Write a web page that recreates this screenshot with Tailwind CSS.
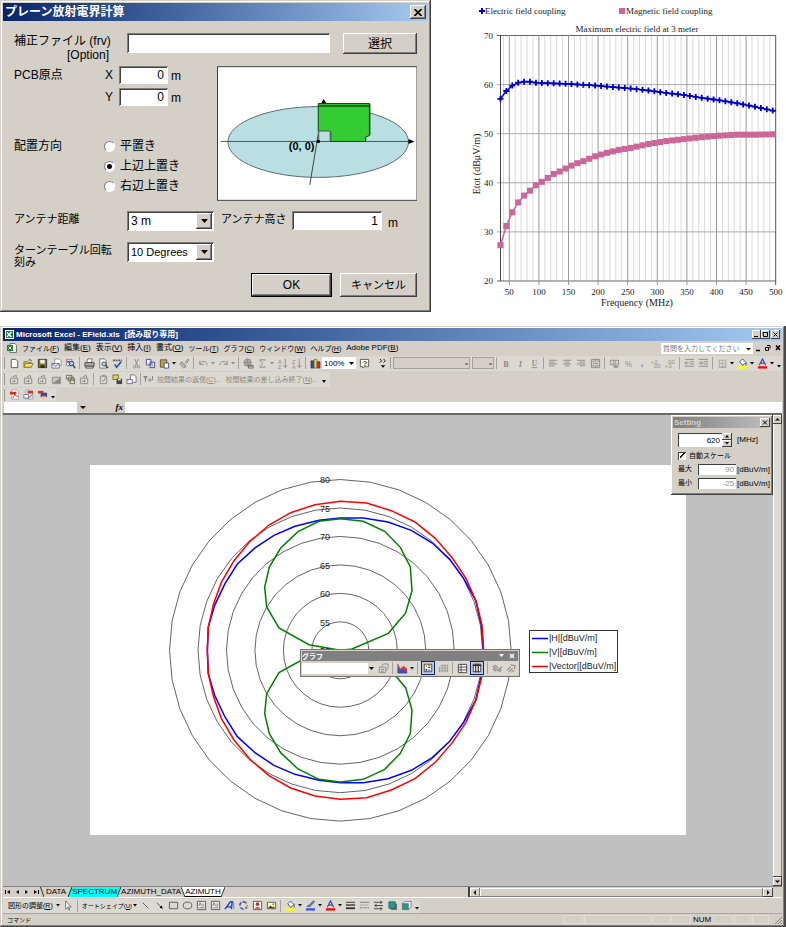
<!DOCTYPE html>
<html lang="ja">

<head>
  <meta charset="UTF-8">
  <meta name="viewport" content="width=device-width, initial-scale=1.0">
  <title>EField</title>
  <script src="https://cdn.jsdelivr.net/npm/@tailwindcss/browser@4"></script>
</head>

<body class="bg-white text-black font-['Liberation_Sans','Noto_Sans_CJK_JP',sans-serif] leading-none">
  <div class="flex items-start">
    <!-- Dialog -->
    <section class="w-[431px] shrink-0 bg-[#d4d0c8] p-[3px] text-[12px] shadow-[inset_-1px_-1px_0_#404040,inset_1px_1px_0_#d4d0c8,inset_-2px_-2px_0_#808080,inset_2px_2px_0_#fff]">
      <header class="flex h-[18px] items-center justify-between bg-linear-to-r from-[#0a246a] to-[#a6caf0] pl-[2px] pr-[2px]">
        <h1 class="text-[12px] font-bold text-white">プレーン放射電界計算</h1>
        <button aria-label="Close" class="flex h-[14px] w-4 items-center justify-center bg-[#d4d0c8] shadow-[inset_-1px_-1px_0_#404040,inset_1px_1px_0_#fff,inset_-2px_-2px_0_#808080]">
          <svg class="h-[7px] w-2" viewBox="0 0 8 7"><path d="M.5 0l7 7M7.500 0l-7 7" stroke="#000" stroke-width="1.600" /></svg>
        </button>
      </header>

      <form class="px-[11px] pb-3 pt-3" onsubmit="return false">
        <div class="flex h-[33px] items-start">
          <label for="frv" class="w-[113px] pr-[18px] pt-[1px] text-right leading-[14px]"><span class="block whitespace-nowrap text-left text-[12px]">補正ファイル (frv)</span>[Option]</label>
          <input id="frv" type="text" class="h-5 w-[203px] bg-white px-1 shadow-[inset_1px_1px_0_#808080,inset_-1px_-1px_0_#fff,inset_2px_2px_0_#404040]">
          <button class="ml-[13px] h-[21px] w-[74px] bg-[#d4d0c8] text-[12px] shadow-[inset_-1px_-1px_0_#404040,inset_1px_1px_0_#fff,inset_-2px_-2px_0_#808080]">選択</button>
        </div>

        <div class="flex h-[145px] items-start">
          <div class="w-[203px]">
            <div class="flex h-[22px] items-start">
              <span class="w-[91px] pt-[3px]">PCB原点</span>
              <label for="px" class="w-[14px] pt-[3px]">X</label>
              <input id="px" type="text" value="0" class="h-[18px] w-[49px] bg-white px-1 text-right shadow-[inset_1px_1px_0_#808080,inset_-1px_-1px_0_#fff,inset_2px_2px_0_#404040]">
              <span class="pl-[3px] pt-[4px]">m</span>
            </div>
            <div class="flex h-[48px] items-start">
              <span class="w-[91px]"></span>
              <label for="py" class="w-[14px] pt-[3px]">Y</label>
              <input id="py" type="text" value="0" class="h-[18px] w-[49px] bg-white px-1 text-right shadow-[inset_1px_1px_0_#808080,inset_-1px_-1px_0_#fff,inset_2px_2px_0_#404040]">
              <span class="pl-[3px] pt-[4px]">m</span>
            </div>
            <fieldset class="flex">
              <legend class="float-left w-[90px] pt-1">配置方向</legend>
              <div class="text-[12px]">
                <label class="flex h-5 items-center gap-[5px]"><input type="radio" name="dir" class="h-[11px] w-[11px] appearance-none rounded-full border border-[#808080] border-b-white border-r-white bg-white">平置き</label>
                <label class="flex h-5 items-center gap-[5px]"><input type="radio" name="dir" checked class="h-[11px] w-[11px] appearance-none rounded-full border border-[#808080] border-b-white border-r-white bg-white checked:bg-[radial-gradient(circle,#000_2px,#fff_3px)]">上辺上置き</label>
                <label class="flex h-5 items-center gap-[5px]"><input type="radio" name="dir" class="h-[11px] w-[11px] appearance-none rounded-full border border-[#808080] border-b-white border-r-white bg-white">右辺上置き</label>
              </div>
            </fieldset>
          </div>
          <svg class="h-[135px] w-[201px] bg-white" viewBox="0 0 201 135">
            <rect x=".5" y=".5" width="200" height="134" fill="none" stroke="#404040" />
            <ellipse cx="101.500" cy="76" rx="90.500" ry="35.500" fill="#b9dfe2" stroke="#5f6c6d" />
            <path d="M4 75.500H195" stroke="#555" />
            <path d="M192 73l6 2.500-6 2.500z" fill="#000" />
            <path d="M102 65L93 119" stroke="#444" />
            <path d="M104 38l3-5 3 5z" fill="#000" />
            <path d="M101.500 37.500H153V69.500L149 71V75.500H114V65.500H101.500z" fill="#3c3" stroke="#123c12" />
            <path d="M101.500 40H153M153 38V69" stroke="#0b530b" stroke-width="1.500" />
            <path d="M102 65h11.500v10.500H102z" fill="#b9dfe2" stroke="#555" />
            <rect x="100" y="74" width="3" height="3" />
            <text x="72" y="84" font-size="11" font-weight="bold">(0, 0)</text>
          </svg>
        </div>

        <div class="flex h-[31px] items-start">
          <label for="dist" class="w-[113px] pt-[3px] text-[11px]">アンテナ距離</label>
          <div class="relative">
            <select id="dist" class="h-5 w-[87px] appearance-none bg-white pl-1 text-[12px] shadow-[inset_1px_1px_0_#808080,inset_-1px_-1px_0_#fff,inset_2px_2px_0_#404040]"><option>3 m</option></select>
            <span class="pointer-events-none absolute right-[2px] top-[2px] flex h-4 w-4 items-center justify-center bg-[#d4d0c8] shadow-[inset_-1px_-1px_0_#404040,inset_1px_1px_0_#fff,inset_-2px_-2px_0_#808080]"><svg class="h-1 w-[7px]" viewBox="0 0 7 4"><path d="M0 0h7L3.500 4z" /></svg></span>
          </div>
          <label for="ht" class="w-[78px] pl-[7px] pt-[3px] text-[11px]">アンテナ高さ</label>
          <input id="ht" type="text" value="1" class="h-[19px] w-[90px] bg-white px-1 text-right shadow-[inset_1px_1px_0_#808080,inset_-1px_-1px_0_#fff,inset_2px_2px_0_#404040]">
          <span class="pl-[6px] pt-[6px]">m</span>
        </div>
        <div class="flex h-[31px] items-start">
          <label for="step" class="w-[113px] pt-[2px] text-[11px] leading-[12px]">ターンテーブル回転<br>刻み</label>
          <div class="relative">
            <select id="step" class="h-5 w-[87px] appearance-none bg-white pl-1 text-[11px] shadow-[inset_1px_1px_0_#808080,inset_-1px_-1px_0_#fff,inset_2px_2px_0_#404040]"><option>10 Degrees</option></select>
            <span class="pointer-events-none absolute right-[2px] top-[2px] flex h-4 w-4 items-center justify-center bg-[#d4d0c8] shadow-[inset_-1px_-1px_0_#404040,inset_1px_1px_0_#fff,inset_-2px_-2px_0_#808080]"><svg class="h-1 w-[7px]" viewBox="0 0 7 4"><path d="M0 0h7L3.500 4z" /></svg></span>
          </div>
        </div>
        <div class="flex justify-end gap-2">
          <button class="h-6 w-[81px] border border-black bg-[#d4d0c8] text-[12px] shadow-[inset_-1px_-1px_0_#404040,inset_1px_1px_0_#fff,inset_-2px_-2px_0_#808080]">OK</button>
          <button class="h-6 w-[77px] bg-[#d4d0c8] text-[11px] shadow-[inset_-1px_-1px_0_#404040,inset_1px_1px_0_#fff,inset_-2px_-2px_0_#808080]">キャンセル</button>
        </div>
      </form>
    </section>

    <!-- Line chart -->
    <svg id="lineChart" class="min-w-0 flex-1 font-['Liberation_Serif',serif] text-[9px]" viewBox="0 0 355 312" fill="#222">
      <path d="M51 8.500v6M48 11.500h6" transform="translate(0 -.5)" stroke="#0000c8" stroke-width="2" />
      <text x="54" y="14">Electric field coupling</text>
      <rect x="188" y="8" width="6" height="6" fill="#cc6699" />
      <text x="195" y="14">Magnetic field coupling</text>
      <text x="206" y="32" text-anchor="middle">Maximum electric field at 3 meter</text>
      <text x="206" y="306" text-anchor="middle" font-size="10">Frequency (MHz)</text>
      <text x="-164" y="49" text-anchor="middle" transform="rotate(-90)" font-size="10">Etot (dBμV/m)</text>
      <g id="lineGrid"></g>
      <g id="lineSeries"></g>
    </svg>
  </div>

  <!-- Excel window -->
  <section class="mt-[14px] bg-[#d4d0c8] py-[2px] pl-[3px] pr-[4px] text-[8px] shadow-[inset_-2px_-1px_0_#4a4848,inset_1px_1px_0_#d4d0c8,inset_-3px_-2px_0_#808080,inset_2px_2px_0_#fff]">
    <header class="flex h-[13px] items-center bg-linear-to-r from-[#0a246a] to-[#a6caf0] px-[2px] text-white">
      <svg class="h-[9px] w-[9px]" viewBox="0 0 9 9"><rect width="9" height="9" fill="#fff" /><path d="M1 1h7v7H1z" fill="#1d7d33" /><path d="M2 2.500l4.500 4.500M6.500 2L2 7" stroke="#fff" stroke-width="1.400" /></svg>
      <h2 class="flex gap-[5px] whitespace-pre pl-[2px] font-bold"><span>Microsoft Excel - EField.xls</span><span>[読み取り専用]</span></h2>
      <div class="ml-auto flex">
        <button aria-label="Minimize" class="h-[9px] w-[9px] bg-[#d4d0c8] shadow-[inset_-1px_-1px_0_#404040,inset_1px_1px_0_#fff]"><svg viewBox="0 0 9 9"><path d="M2 6.500h4" stroke="#000" /></svg></button>
        <button aria-label="Maximize" class="h-[9px] w-[9px] bg-[#d4d0c8] shadow-[inset_-1px_-1px_0_#404040,inset_1px_1px_0_#fff]"><svg viewBox="0 0 9 9"><path d="M2 2.500h4.500v4H2.500z" fill="none" stroke="#000" /></svg></button>
        <button aria-label="Close" class="ml-[1px] h-[9px] w-[9px] bg-[#d4d0c8] shadow-[inset_-1px_-1px_0_#404040,inset_1px_1px_0_#fff]"><svg viewBox="0 0 9 9"><path d="M2.500 2.500l4 4M6.500 2.500l-4 4" stroke="#000" /></svg></button>
      </div>
    </header>

    <nav class="flex h-[14px] items-center gap-[5px] whitespace-nowrap pl-1">
      <svg class="h-[10px] w-[10px]" viewBox="0 0 10 10"><path d="M3 .5h5l1.500 2v7H3z" fill="#fff" stroke="#777" /><path d="M0 2h6v6H0z" fill="#1d7d33" /><path d="M1.500 3.500l3 3M4.500 3.500l-3 3" stroke="#fff" /></svg>
      <button class="text-[7px]">ファイル(<u>F</u>)</button>
      <button class="text-[8px]">編集(<u>E</u>)</button>
      <button class="text-[8px]">表示(<u>V</u>)</button>
      <button class="text-[8px]">挿入(<u>I</u>)</button>
      <button class="text-[8px]">書式(<u>O</u>)</button>
      <button class="text-[7px]">ツール(<u>T</u>)</button>
      <button class="text-[7px]">グラフ(<u>C</u>)</button>
      <button class="text-[7px]">ウィンドウ(<u>W</u>)</button>
      <button class="text-[7px]">ヘルプ(<u>H</u>)</button>
      <button class="text-[8px]">Adobe PDF(<u>B</u>)</button>
      <div class="ml-auto flex items-center">
        <input aria-label="質問" type="text" value="質問を入力してください" class="h-[11px] w-[83px] bg-white pl-[2px] text-[7px] text-[#777]">
        <svg class="h-[11px] w-[9px] bg-white" viewBox="0 0 9 11"><path d="M2 5h5L4.500 7.500z" /></svg>
        <svg class="h-[10px] w-[29px]" viewBox="0 0 29 10" fill="none" stroke="#000"><path d="M3 7.500h4" stroke-width="1.500" /><path d="M12.500 4.500h3v3h-3zM14 2.500h3v3" /><path d="M23 2.500l4 4.500M27 2.500l-4 4.500" stroke-width="1.500" /></svg>
      </div>
    </nav>

    <div class="flex h-4 items-center overflow-hidden">
      <div id="tbStandard" class="flex h-[15px] shrink-0 items-center bg-[#dcd9d2]"></div>
      <input aria-label="Zoom" type="text" value="100%" class="h-3 w-[26px] shrink-0 bg-white pl-[2px] text-[8px]">
      <svg class="h-3 w-2 shrink-0 bg-white" viewBox="0 0 8 12"><path d="M1 5h5L3.500 8z" /></svg>
      <div id="tbHelp" class="flex h-[15px] w-[34px] shrink-0 items-center bg-[#dcd9d2] pl-[1px]"></div>
      <div class="flex h-[15px] shrink-0 items-center gap-[2px] bg-[#dcd9d2]">
        <span class="h-3 w-[1px] bg-[#999]"></span>
        <select aria-label="Font" disabled class="h-3 w-[77px] appearance-none border border-[#a5a29c] bg-[#d4d0c8] bg-[linear-gradient(#8d8a84,#8d8a84)] bg-[length:3px_2px] bg-[position:71px_5px] bg-no-repeat"></select>
        <select aria-label="Size" disabled class="h-3 w-[22px] appearance-none border border-[#a5a29c] bg-[#d4d0c8] bg-[linear-gradient(#8d8a84,#8d8a84)] bg-[length:3px_2px] bg-[position:16px_5px] bg-no-repeat"></select>
      </div>
      <div id="tbFormat" class="flex h-[15px] flex-1 items-center bg-[#dcd9d2]"></div>
    </div>

    <div class="flex h-4 items-center">
      <div id="tbReview" class="flex h-[15px] items-center bg-[#dcd9d2]"></div>
      <div class="flex h-[15px] items-center gap-1 whitespace-nowrap bg-[#dcd9d2] pr-1 text-[7px] text-[#8d8a84]">
        <svg class="h-2 w-[10px]" viewBox="0 0 10 8" fill="#8d8a84"><path d="M0 1h5L3 4v3H2V4z" /><path d="M9.500 1v4H6M7.500 3L5.500 5l2 2" fill="none" stroke="#8d8a84" /></svg>
        <button disabled>校閲結果の返信(<u>C</u>)...</button>
        <button disabled>校閲結果の差し込み終了(<u>N</u>)...</button>
        <svg class="mt-1 h-[3px] w-1" viewBox="0 0 4 3"><path d="M0 0h4L2 3z" fill="#000" /></svg>
      </div>
    </div>

    <div class="flex h-[15px] items-center">
      <div id="tbPdf" class="flex h-[14px] items-center bg-[#dcd9d2]"></div>
    </div>

    <div class="flex h-[11px] items-center">
      <input aria-label="Name box" type="text" class="ml-[1px] h-full w-[73px] bg-white">
      <svg class="h-[11px] w-[12px]" viewBox="0 0 12 11"><path d="M3 4h6L6 7z" /></svg>
      <label for="formula" class="w-9 pr-[2px] text-right font-['Liberation_Serif',serif] text-[9px] font-bold italic">fx</label>
      <input id="formula" type="text" class="h-full min-w-0 flex-1 bg-white">
    </div>

    <!-- Chart sheet -->
    <div class="flex border-t-2 border-[#6b6b6b]">
      <main class="relative min-w-0 flex-1 bg-[#c0c0c0] px-[87px] pb-[51px] pt-[50px]">
        <div class="relative bg-white">
          <svg id="polar" class="block w-full text-[9px]" viewBox="0 0 596 370" fill="none">
            <g id="polarLines" transform="translate(70 5) scale(.33333)" stroke-width="4.500"></g>
            <g fill="#222">
              <text x="230" y="18">80</text>
              <text x="230" y="47">75</text>
              <text x="230" y="75">70</text>
              <text x="230" y="104">65</text>
              <text x="230" y="132">60</text>
              <text x="230" y="161">55</text>
              <text x="230" y="189">50</text>
            </g>
            <rect x="439.500" y="165.500" width="88" height="42" fill="#fff" stroke="#333" />
            <path d="M442 173.500h16" stroke="#00f" stroke-width="1.500" />
            <path d="M442 187.500h16" stroke="#008000" stroke-width="1.500" />
            <path d="M442 201.500h16" stroke="#f00" stroke-width="1.500" />
            <g fill="#222">
              <text x="459" y="176">|H|[dBuV/m]</text>
              <text x="459" y="190">|V|[dBuV/m]</text>
              <text x="459" y="204">|Vector|[dBuV/m]</text>
            </g>
          </svg>

          <!-- Floating chart toolbar -->
          <div class="absolute left-[210px] top-[184px] w-[220px] border border-[#77736d] bg-[#d4d0c8] p-[1px]">
            <div class="flex h-[10px] items-center bg-[#808080] pr-[2px] text-[7px] font-bold text-white">
              <span>グラフ</span>
              <svg class="ml-auto h-2 w-[17px]" viewBox="0 0 17 8"><path d="M0 2h5L2.500 5z" fill="#fff" /><path d="M11 2l4 4M15 2l-4 4" stroke="#fff" stroke-width="1.300" /></svg>
            </div>
            <div class="flex h-[14px] items-center">
              <input aria-label="Chart object" type="text" class="h-[11px] w-[73px] min-w-0 bg-white">
              <svg class="h-[11px] w-[8px] shrink-0 bg-[#dcd9d2]" viewBox="0 0 8 11"><path d="M1 4h5L3.500 7z" /></svg>
              <div id="tbChart" class="flex shrink-0 items-center bg-[#dcd9d2]"></div>
            </div>
          </div>
        </div>

        <!-- Setting panel -->
        <form class="absolute right-0 top-0 w-[102px] bg-[#d4d0c8] p-[2px] pb-[6px] text-[8px] shadow-[inset_-1px_-1px_0_#404040,inset_1px_1px_0_#fff,inset_-2px_-2px_0_#808080]" onsubmit="return false">
          <div class="flex h-[11px] items-center justify-between bg-linear-to-r from-[#808080] to-[#c0c0c0] px-[1px] font-bold text-[#d4d0c8]">
            <span>Setting</span>
            <button aria-label="Close" class="h-[9px] w-[10px] bg-[#d4d0c8] shadow-[inset_-1px_-1px_0_#404040,inset_1px_1px_0_#fff]"><svg class="h-[9px] w-[10px]" viewBox="0 0 10 9"><path d="M3 2.500l4 4M7 2.500l-4 4" stroke="#000" /></svg></button>
          </div>
          <div class="flex items-center pl-[5px] pt-[5px]">
            <input id="mhz" type="text" value="620" class="h-[14px] w-11 bg-white pr-[2px] text-right shadow-[inset_1px_1px_0_#404040,inset_-1px_-1px_0_#fff]">
            <span class="flex flex-col">
              <button aria-label="Up" class="h-[7px] w-[10px] bg-[#d4d0c8] shadow-[inset_-1px_-1px_0_#404040,inset_1px_1px_0_#fff]"><svg class="h-[7px] w-[10px]" viewBox="0 0 10 7"><path d="M3 4.500h4L5 2z" /></svg></button>
              <button aria-label="Down" class="h-[7px] w-[10px] bg-[#d4d0c8] shadow-[inset_-1px_-1px_0_#404040,inset_1px_1px_0_#fff]"><svg class="h-[7px] w-[10px]" viewBox="0 0 10 7"><path d="M3 2h4L5 4.500z" /></svg></button>
            </span>
            <label for="mhz" class="pl-[5px] text-[8px]">[MHz]</label>
          </div>
          <label class="flex h-[17px] items-center gap-[3px] pl-[5px] text-[7px]">
            <input type="checkbox" checked class="h-2 w-2 appearance-none bg-white bg-[linear-gradient(135deg,transparent_40%,#000_40%,#000_60%,transparent_60%)] bg-[length:5px_5px] bg-center bg-no-repeat shadow-[inset_1px_1px_0_#404040]">自動スケール
          </label>
          <div class="flex h-[14px] items-start pl-[5px] text-[8px]">
            <label for="max" class="w-5 pt-[1px] text-[7px]">最大</label>
            <input id="max" type="text" value="90" disabled class="h-[11px] w-[38px] bg-white pr-[2px] text-right text-[#909090] shadow-[inset_1px_1px_0_#404040]">
            <span class="pl-[1px] pt-[2px]">[dBuV/m]</span>
          </div>
          <div class="flex items-start pl-[5px] text-[8px]">
            <label for="min" class="w-5 pt-[1px] text-[7px]">最小</label>
            <input id="min" type="text" value="-25" disabled class="h-[11px] w-[38px] bg-white pr-[2px] text-right text-[#909090] shadow-[inset_1px_1px_0_#404040]">
            <span class="pl-[1px] pt-[2px]">[dBuV/m]</span>
          </div>
        </form>
      </main>

      <!-- Vertical scrollbar -->
      <div class="flex w-[9px] flex-col justify-between bg-[#dedbd4] shadow-[inset_1px_0_0_#fff,inset_-1px_0_0_#808080]">
        <button aria-label="Scroll up" class="h-[9px] w-[9px] bg-[#d4d0c8] shadow-[inset_-1px_-1px_0_#404040,inset_1px_1px_0_#fff]"><svg viewBox="0 0 9 9"><path d="M2 5.500h5L4.500 3z" /></svg></button>
        <button aria-label="Scroll down" class="h-[10px] w-[9px] border-t border-[#404040] bg-[#d4d0c8] shadow-[inset_-1px_-1px_0_#404040,inset_1px_1px_0_#fff]"><svg viewBox="0 0 9 9"><path d="M2 3.500h5L4.500 6z" /></svg></button>
      </div>
    </div>

    <!-- Sheet tabs -->
    <div class="flex h-[11px] items-center border-t border-[#808080]">
      <svg class="h-[10px] w-[37px]" viewBox="0 0 37 10"><path d="M2 3h1v4H2zM7 3v4L4 5zM16 3v4l-3-2zM22 3v4l3-2zM31 3v4l3-2zM35 3h1v4h-1z" /></svg>
      <button class="flex items-center"><svg class="h-[10px] w-1" viewBox="0 0 4 10"><path d="M.5 0L4 10" stroke="#000" stroke-width=".8" /></svg><span class="px-[2px]">DATA</span></button>
      <button class="flex items-center"><svg class="h-[10px] w-1" viewBox="0 0 4 10"><path d="M4 0v10H0z" fill="#00ffff" /><path d="M4 0L0 10" stroke="#000" stroke-width=".8" /></svg><span class="flex h-[10px] items-center bg-[#00ffff]">SPECTRUM</span></button>
      <button class="flex items-center"><svg class="h-[10px] w-1" viewBox="0 0 4 10"><path d="M0 0h4L0 10z" fill="#00ffff" /><path d="M4 0L0 10" stroke="#000" stroke-width=".8" /></svg><span class="text-[8px]">AZIMUTH_DATA</span></button>
      <button class="flex items-center"><svg class="h-[10px] w-1" viewBox="0 0 4 10"><path d="M0 0h4v10z" fill="#fff" /><path d="M0 0l4 10" stroke="#000" stroke-width=".8" /></svg><span class="flex h-[10px] items-center border-b border-black bg-white">AZIMUTH</span><svg class="h-[10px] w-1" viewBox="0 0 4 10"><path d="M0 0h4L0 10z" fill="#fff" /><path d="M4 0L0 10" stroke="#000" stroke-width=".8" /></svg></button>
      <div class="ml-auto flex h-[10px] w-[314px] items-center border-l-2 border-[#404040]">
        <button aria-label="Scroll left" class="h-[9px] w-[10px] bg-[#d4d0c8] shadow-[inset_-1px_-1px_0_#808080,inset_1px_1px_0_#fff]"><svg class="h-[9px] w-[10px]" viewBox="0 0 10 9"><path d="M6 2v5L3.500 4.500z" /></svg></button>
        <span class="h-[9px] flex-1 shadow-[inset_-1px_-1px_0_#808080,inset_1px_1px_0_#fff]"></span>
        <button aria-label="Scroll right" class="mr-[9px] h-[9px] w-[10px] bg-[#d4d0c8] shadow-[inset_-1px_-1px_0_#404040,inset_1px_1px_0_#fff]"><svg class="h-[9px] w-[10px]" viewBox="0 0 10 9"><path d="M4 2v5l2.500-2.500z" /></svg></button>
      </div>
    </div>

    <!-- Drawing toolbar -->
    <div class="flex h-4 items-center border-t border-white">
      <div class="flex h-[14px] items-center whitespace-nowrap bg-[#dcd9d2] pl-[5px]">
        <button class="text-[7px]">図形の調整(<u>R</u>)</button>
        <div id="tbDraw1" class="flex items-center pl-[2px] pr-[2px]"></div>
        <button class="text-[6px]">オートシェイプ(<u>U</u>)</button>
        <div id="tbDraw2" class="flex items-center"></div>
      </div>
    </div>

    <!-- Status bar -->
    <footer class="flex h-3 items-center border-t border-[#aaa69e]">
      <span class="pl-1 text-[6px]">コマンド</span>
      <div class="ml-auto flex h-[9px] items-center gap-[1px]">
        <span class="h-full w-5 border border-[#e0ddd6]"></span>
        <span class="h-full w-[68px] border border-[#e0ddd6]"></span>
        <span class="h-full w-[17px] border border-[#e0ddd6]"></span>
        <span class="h-full w-5 border border-[#e0ddd6]"></span>
        <span class="flex h-full w-5 items-center justify-center text-[8px]">NUM</span>
        <span class="h-full w-5 border border-[#e0ddd6]"></span>
        <span class="h-full w-[17px] border border-[#e0ddd6]"></span>
        <span class="h-full w-[17px] border border-[#e0ddd6]"></span>
        <svg class="ml-1 h-2 w-2" viewBox="0 0 8 8"><path d="M1 8l7-7M4 8l4-4M7 8l1-1" stroke="#808080" /></svg>
      </div>
    </footer>
  </section>

  <script>
    // Toolbar icons, drawn on a 12 x 12 grid
    const G = '#8d8a84';
    const bucket = '<path d="M3 4l3-3 4 4-4 3z" fill="#fff" stroke="#3b4a8c"/><path d="M10 5v3" stroke="#3b4a8c"/>';
    const folder = `<path d="M1.500 4.500h8v6h-8zM4 3l4-1.500V4" fill="none" stroke="${G}"/><path d="M3 8h4M6 6v3" stroke="${G}"/>`;
    const icons = {
      new: '<path d="M2.500 1.500h5l2 2v7h-7z" fill="#fff" stroke="#555"/>',
      open: '<path d="M1 4h4l1 1h3v5H1z" fill="#d8b740" stroke="#6b5a10" stroke-width=".7"/><path d="M3 6h8l-2 4H1z" fill="#f5e07a" stroke="#6b5a10" stroke-width=".7"/><path d="M6 2.500c2-1.500 3 0 3 1" fill="none" stroke="#333"/>',
      save: '<path d="M1.500 1.500h9v9h-9z" fill="#7d7a22" stroke="#333"/><path d="M3.500 2h5v4h-5z" fill="#e8e8e8"/><path d="M4 8h4v2.500H4z" fill="#222"/>',
      mail: '<path d="M4 1h5l2 2v5H4z" fill="#fff" stroke="#777" stroke-width=".8"/><path d="M1 6h8v5H1z" fill="#eef" stroke="#556" stroke-width=".8"/><path d="M1 6l4 3 4-3" fill="none" stroke="#556" stroke-width=".8"/>',
      find: '<path d="M1.500 1.500h6v7h-6z" fill="#fff" stroke="#669" stroke-width=".8"/><path d="M2 3h4v2H2z" fill="#c33"/><circle cx="7" cy="6" r="2.500" fill="#9ce" stroke="#335"/><path d="M9 8l2 3" stroke="#335" stroke-width="1.500"/>',
      print: '<path d="M4 1h5l-1 4H3z" fill="#fff" stroke="#555" stroke-width=".8"/><path d="M1 5h10v4H1z" fill="#aaa" stroke="#333" stroke-width=".8"/><path d="M2 9h8v2H2z" fill="#ddd" stroke="#333" stroke-width=".8"/>',
      preview: '<path d="M2 1h5l2 2v8H2z" fill="#fff" stroke="#555" stroke-width=".8"/><circle cx="6.500" cy="6.500" r="2.300" fill="#bde" stroke="#444"/><path d="M8 8l3 3" stroke="#444" stroke-width="1.500"/>',
      spell: '<path d="M1 2.500h10" stroke="#555" stroke-width="2" stroke-dasharray="2 1"/><path d="M3 7l2 3 5-6" fill="none" stroke="#2447b5" stroke-width="1.700"/>',
      cut: `<path d="M4 1l3 7M8 1L5 8" stroke="${G}"/><circle cx="4" cy="9.500" r="1.400" fill="none" stroke="${G}"/><circle cx="8" cy="9.500" r="1.400" fill="none" stroke="${G}"/>`,
      copy: '<path d="M1.500 1.500h5v6h-5zM5.500 4.500h5v6h-5z" fill="#eef" stroke="#3b4a8c"/><path d="M7 6.500h2M7 8.500h2" stroke="#3b4a8c" stroke-width=".7"/>',
      paste: '<path d="M1.500 2h7v8h-7z" fill="#c9a13a" stroke="#5f5030"/><path d="M3.500 1h3v2h-3z" fill="#888"/><path d="M5.500 5.500h5v5.500h-5z" fill="#fff" stroke="#3b4a8c"/>',
      brush: `<path d="M7 4l3-3 1 1-3 4zM2 5l5 5M3 4l5 5-3 2-4-4z" fill="#c8c5be" stroke="${G}"/>`,
      undo: `<path d="M2 3v4h4M2 7c2-5 8-4 8 1" fill="none" stroke="${G}"/>`,
      redo: `<path d="M10 3v4H6M10 7C8 2 2 3 2 8" fill="none" stroke="${G}"/>`,
      link: `<circle cx="5" cy="5" r="4" fill="#b0ada7" stroke="${G}"/><path d="M1 5h8M5 1v8M6 9h5" stroke="${G}"/><path d="M6 8h5v3H6z" fill="none" stroke="#666"/>`,
      sum: `<path d="M9 3V2H3l3 4-3 4h6V9" fill="none" stroke="${G}"/>`,
      asc: `<text x="1" y="6" font-size="6" fill="${G}">A</text><text x="1" y="12" font-size="6" fill="${G}">Z</text><path d="M9 1v9M7 8l2 2.500L11 8" fill="none" stroke="${G}"/>`,
      desc: `<text x="1" y="6" font-size="6" fill="${G}">Z</text><text x="1" y="12" font-size="6" fill="${G}">A</text><path d="M9 1v9M7 8l2 2.500L11 8" fill="none" stroke="${G}"/>`,
      chart: '<path d="M1 3h3v8H1z" fill="#2b48c8" stroke="#222" stroke-width=".5"/><path d="M4.500 1.500h3V11h-3z" fill="#f1d42c" stroke="#222" stroke-width=".5"/><path d="M8 4h3v7H8z" fill="#d02a2a" stroke="#222" stroke-width=".5"/>',
      help: '<path d="M1.500 1.500h9v8h-5L4 11V9.500H1.500z" fill="#ffffd8" stroke="#555"/><text x="4" y="8.500" font-size="8" font-weight="bold" fill="#24469c">?</text>',
      more: '<path d="M2 1l2 2-2 2M6 1l2 2-2 2" fill="none" stroke="#000"/><path d="M3 8h5L5.500 10.500z"/>',
      bold: `<text x="2.500" y="9.500" font-size="9" font-weight="bold" font-family="Liberation Serif" fill="${G}">B</text>`,
      italic: `<text x="4" y="9.500" font-size="9" font-weight="bold" font-style="italic" font-family="Liberation Serif" fill="${G}">I</text>`,
      under: `<text x="3" y="9" font-size="8" font-weight="bold" font-family="Liberation Serif" fill="${G}">U</text><path d="M3 10.500h6" stroke="${G}"/>`,
      left: `<path d="M1 2.500h9M1 4.500h6M1 6.500h9M1 8.500h6" stroke="${G}"/>`,
      center: `<path d="M1 2.500h9M3 4.500h5M1 6.500h9M3 8.500h5" stroke="${G}"/>`,
      right: `<path d="M1 2.500h9M4 4.500h6M1 6.500h9M4 8.500h6" stroke="${G}"/>`,
      merge: `<path d="M1.500 1.500h9v9h-9zM1 3.500h10M1 8.500h10M6 1v2M6 9v2M3 6h6" fill="none" stroke="${G}"/>`,
      money: `<path d="M1.500 2.500h9v5h-9z" fill="none" stroke="${G}"/><circle cx="6" cy="5" r="1.500" fill="none" stroke="${G}"/><path d="M5 9.500h5" stroke="${G}" stroke-width="2"/>`,
      percent: `<text x="2" y="10" font-size="9" fill="${G}">%</text>`,
      comma: `<text x="4" y="9" font-size="10" font-weight="bold" fill="${G}">,</text>`,
      decInc: `<text x="0" y="6" font-size="5" fill="${G}">+.0</text><text x="2" y="11" font-size="6" fill="${G}">.00</text>`,
      decDec: `<text x="2" y="6" font-size="6" fill="${G}">.00</text><text x="0" y="11" font-size="5" fill="${G}">+.0</text>`,
      outdent: `<path d="M1 1.500h10M6 4h5M6 6.500h5M1 9h10M5 5.500H1M3 3.500l-2 2 2 2" fill="none" stroke="${G}"/>`,
      indent: `<path d="M1 1.500h10M6 4h5M6 6.500h5M1 9h10M1 5.500h4M3 3.500l2 2-2 2" fill="none" stroke="${G}"/>`,
      border: `<path d="M2 2.500h8M2 6h8M2.500 2v8M6 2v8M9.500 2v8" stroke="#b0ada7"/><path d="M2 10h8" stroke="${G}"/>`,
      fill: bucket + '<path d="M1 9h10v2.500H1z" fill="#ff0"/>',
      line: '<path d="M2 7l2-1 5-5 1.500 1-5 5z" fill="#789" stroke="#3b4a8c" stroke-width=".8"/><path d="M1 9h10v2.500H1z" fill="#3c50f5"/>',
      font: '<path d="M2.500 8L6 1l3.500 7M4 5.500h4" fill="none" stroke="#3b4a9c" stroke-width="1.300"/><path d="M1 9h10v2.500H1z" fill="#f00"/>',
      folder: folder,
      note: `<path d="M1.500 3.500h9v7h-9z" fill="#c8c5be" stroke="${G}"/><path d="M2 10l8-6v6z" fill="${G}"/>`,
      notes: '<path d="M1.500 1.500h6v4h-6zM3.500 3.500h6v4h-6zM5.500 5.500h5v5h-5z" fill="#f1edb0" stroke="#666"/>',
      task: `<path d="M2.500 2.500h7v8h-7z" fill="none" stroke="${G}"/><path d="M4 6l2 2 3-5M4 1.500h4" fill="none" stroke="${G}"/>`,
      version: '<path d="M1 1h6v5H1z" fill="#e7d33a" stroke="#555" stroke-width=".8"/><path d="M5 5h6v6H5z" fill="#444"/><path d="M6.500 5h3v2h-3z" fill="#fff"/>',
      send: '<path d="M5 1h4l2 2v6H5z" fill="#fff" stroke="#555" stroke-width=".8"/><path d="M1 6h6v4.500H1z" fill="#eef" stroke="#556" stroke-width=".8"/>',
      pdf: '<path d="M3 1h5l2.500 2v8H3z" fill="#fff" stroke="#999" stroke-width=".8"/><path d="M1 3h7v3H1z" fill="#e03020"/><path d="M4 10c2-2 3-6 2-6s0 4 4 4" fill="none" stroke="#d02010" stroke-width=".9"/>',
      pdfMail: '<path d="M3 1h5l2.500 2v8H3z" fill="#dfe8fa" stroke="#89a" stroke-width=".8"/><path d="M5 2h6v3H5z" fill="#e03020"/><path d="M1 6h5v4H1z" fill="#fff" stroke="#468" stroke-width=".8"/><path d="M6 10l4-4" stroke="#d02010"/>',
      pdfRev: '<path d="M1 2h6v3H1z" fill="#e03020"/><path d="M4 4h7v5H4z" fill="#3b4a9c"/><path d="M5 8h5v3H5z" fill="#f4c98a"/>',
      cursor: '<path d="M4 1v9l2-2 1.500 3 1-.5L7 7.500h3z" fill="#fff" stroke="#555" stroke-width=".8"/>',
      slash: '<path d="M3 3l6 6" stroke="#444" stroke-width=".9"/>',
      arrow: '<path d="M3 3l6 6" stroke="#444" stroke-width=".9"/><path d="M9.500 9.500L6 8.500 8.500 6z"/>',
      rect: '<path d="M1.500 2.500h9v7h-9z" fill="none" stroke="#555"/>',
      oval: '<ellipse cx="6" cy="6" rx="4.700" ry="3.700" fill="none" stroke="#555"/>',
      text: '<path d="M1.500 1.500h9v9h-9z" fill="#eee" stroke="#555"/><path d="M3 6.500L4.500 3 6 6.500M3 8.500h6M7 4.500h2M7 6.500h2" fill="none" stroke="#555" stroke-width=".8"/>',
      wordart: '<path d="M1 10l6-8h2l-1 8M3 7.500h5" fill="none" stroke="#2b3fc0" stroke-width="1.600"/><path d="M10.500 2v8" stroke="#7ac" stroke-width="1.500"/>',
      diagram: '<circle cx="6" cy="6" r="4" fill="none" stroke="#3355bb" stroke-width="1.600" stroke-dasharray="4 2"/><circle cx="6" cy="2" r="1.200" fill="#d33"/><circle cx="10" cy="7" r="1.200" fill="#e9b820"/>',
      clip: '<path d="M1.500 1.500h9v9h-9z" fill="#fff" stroke="#555"/><circle cx="6" cy="4.500" r="2" fill="#a33"/><path d="M3 10c0-4 6-4 6 0z" fill="#d66"/>',
      picture: '<path d="M1.500 2.500h9v7h-9z" fill="#ffffa8" stroke="#555"/><path d="M2 9l3-3 2 2 1-1 2 2z" fill="#444"/><circle cx="8" cy="4.500" r="1" fill="#888"/>',
      lines: '<path d="M1 2.500h10" stroke="#333"/><path d="M1 5.500h10" stroke="#333" stroke-width="1.500"/><path d="M1 9h10" stroke="#333" stroke-width="2"/>',
      dashes: '<path d="M1 2.500h10" stroke="#777"/><path d="M1 5.500h10" stroke="#777" stroke-dasharray="1 1"/><path d="M1 8.500h10" stroke="#777" stroke-dasharray="3 1"/>',
      arrows: '<path d="M1 2.500h9M8 1l2 1.500L8 4M2 6h9M4 4.500L2 6l2 1.500M1 9.500h9M8 8l2 1.500-2 1.500" fill="none" stroke="#333" stroke-width=".9"/>',
      shadow: '<path d="M4 4h7v7H4z" fill="#777"/><path d="M2 2h7v7H2z" fill="#1f9b93" stroke="#244" stroke-width=".7"/>',
      cube: '<path d="M1.500 4L4 1.500h7V8L8 10.500z" fill="#eef" stroke="#666" stroke-width=".8"/><path d="M1.500 4H8v6.500H1.500z" fill="#1f9b93" stroke="#666" stroke-width=".8"/>',
      props: `<path d="M1.500 4.500h7v6h-7zM4 4l2-3h5v5L9 8M3 7h4M3 9h3" fill="none" stroke="${G}"/>`,
      area: '<path d="M1 11V2l3 4 3-3 4 3v5z" fill="#e0403a"/><path d="M1 11V5l3 3 3-2 4 3v2z" fill="#3f50c8"/><path d="M1 1v10h10" fill="none" stroke="#444" stroke-width=".8"/>',
      legend: '<path d="M1.500 1.500h9v9h-9z" fill="#fff" stroke="#333"/><path d="M3 2v3h2V2z" fill="#e0c020"/><path d="M3 7v3h2V7z" fill="#2b48c8"/><path d="M6 3.500h3M6 5.500h3M6 8.500h3" stroke="#333"/>',
      grid: `<path d="M3 2.500h8M1 5.500h10M1 8.500h10M4.500 2v8M7.500 2v8M10.500 2v8M1.500 5v5" stroke="${G}" stroke-width=".8"/>`,
      rows: '<path d="M1.500 1.500h9v9h-9z" fill="#fff" stroke="#444"/><path d="M1 4.500h10M1 7.500h10M4.500 1v10" stroke="#444"/>',
      cols: '<path d="M1.500 1.500h9v9h-9z" fill="#fff" stroke="#222"/><path d="M1 3h10M4.500 1v10M7.500 1v10" stroke="#222" stroke-width="1.300"/>',
      angleA: `<path d="M1 3l5 5M3 2l4 4M1 6l3 3M6 9l5-5M8 10l2-3" stroke="${G}" stroke-width="1.200"/>`,
      angleB: `<path d="M1 8l4-4M3 10l4-4M5 2l5 1-1 4M6 10l3-2" fill="none" stroke="${G}" stroke-width="1.200"/>`
    };

    // "|" separator, ":" handle, "v" / "w" drop-down arrows, "_" gap, "," end of bar; a leading "*" marks a pressed button
    function toolbar(id, list) {
      document.getElementById(id).innerHTML = list.split(' ').map(name => {
        if (name === '|') return '<span class="mx-[2px] h-3 w-[1px] shrink-0 bg-[#a5a29c]"></span>';
        if (name === ':') return '<span class="mr-[2px] ml-[1px] h-3 w-[1px] shrink-0 bg-[#999]"></span>';
        if (name === '_') return '<span class="w-[5px] shrink-0"></span>';
        if (name === 'v') return '<svg class="h-[3px] w-[6px] shrink-0" viewBox="0 0 6 3"><path d="M1 0h4L3 2.500z"/></svg>';
        if (name === 'w') return '<svg class="h-[3px] w-[6px] shrink-0" viewBox="0 0 6 3"><path d="M1 0h4L3 2.500z" fill="#8d8a84"/></svg>';
        if (name === ',') return '<svg class="mt-[6px] ml-[1px] h-[3px] w-[6px] shrink-0" viewBox="0 0 6 3"><path d="M1 0h4L3 2.500z"/></svg>';
        if (name[0] === '*') {
          return `<button aria-label="${name.slice(1)}" class="mx-[1px] flex h-[14px] w-[14px] shrink-0 items-center justify-center border border-[#0a246a] bg-[#c5cad8]"><svg class="h-[10px] w-[10px]" viewBox="0 0 12 12">${icons[name.slice(1)]}</svg></button>`;
        }
        return `<button aria-label="${name}" class="flex h-[14px] w-[14px] shrink-0 items-center justify-center"><svg class="h-[11px] w-[11px]" viewBox="0 0 12 12">${icons[name]}</svg></button>`;
      }).join('');
    }

    toolbar('tbStandard', ': new open save mail find | print preview spell | cut copy paste v brush | undo w redo w | link sum w asc desc | chart');
    toolbar('tbHelp', 'help _ more');
    toolbar('tbFormat', '| bold italic under | left center right merge | money percent comma decInc decDec | outdent indent | border v fill v font v ,');
    toolbar('tbReview', ': folder folder folder note notes folder | task version send |');
    toolbar('tbPdf', ': pdf pdfMail pdfRev ,');
    toolbar('tbDraw1', 'v cursor |');
    toolbar('tbDraw2', 'v slash arrow rect oval text text wordart diagram clip picture | fill v line v font v lines dashes arrows shadow cube ,');
    toolbar('tbChart', 'props | area v | *legend grid | rows *cols | angleA angleB');

    // Frequency chart: 35-500 MHz across, 20-70 dBuV/m up
    const fx = f => 78.3 + (f - 50) * 0.592;
    const fy = v => 281 - (v - 20) * 4.91;
    let grid = '';
    for (let f = 40; f < 500; f += 10) {
      if (f % 50) grid += `<path d="M${fx(f)} 36V281" stroke="#d9d9d9"/>`;
    }
    for (let v = 20; v <= 70; v += 10) {
      const y = fy(v);
      grid += `<path d="M66 ${y}H${fx(500)}" stroke="${v === 20 || v === 70 ? '#666' : '#aaa'}"/><text x="62" y="${y + 3}" text-anchor="end">${v}</text>`;
    }
    for (let f = 50; f <= 500; f += 50) {
      grid += `<path d="M${fx(f)} 35V285" stroke="${f === 500 ? '#555' : '#999'}"/><text x="${fx(f)}" y="295" text-anchor="middle">${f}</text>`;
    }
    grid += '<path d="M69.500 35V281" stroke="#444"/>';
    document.getElementById('lineGrid').innerHTML = grid;

    const electric = [[35, 57.1], [45, 58.7], [55, 59.8], [65, 60.4], [75, 60.6], [85, 60.6], [95, 60.4], [155, 60.1], [195, 59.8], [225, 59.5], [255, 59.2], [285, 58.8], [315, 58.3], [345, 57.9], [375, 57.3], [405, 56.8], [435, 56.2], [465, 55.5], [495, 54.7], [500, 54.6]];
    const magnetic = [[35, 27.3], [45, 31.2], [55, 34], [65, 36], [75, 37.4], [85, 38.4], [95, 39.5], [105, 40.2], [115, 41], [125, 41.8], [135, 42.3], [145, 42.9], [155, 43.5], [165, 44], [175, 44.4], [195, 45.4], [215, 46.1], [235, 46.7], [255, 47.1], [285, 47.9], [315, 48.5], [345, 48.9], [375, 49.3], [405, 49.6], [435, 49.8], [465, 49.8], [500, 49.9]];
    function valueAt(data, f) {
      const i = data.findIndex(p => p[0] >= f);
      if (i <= 0) return data[0][1];
      const [a, b] = [data[i - 1], data[i]];
      return a[1] + (b[1] - a[1]) * (f - a[0]) / (b[0] - a[0]);
    }
    const lineOf = (data, color) => `<polyline points="${data.map(p => fx(p[0]) + ',' + fy(p[1])).join(' ')}" fill="none" stroke="${color}" stroke-width="1.500"/>`;
    let series = lineOf(electric, '#0000c8') + lineOf(magnetic, '#cc6699');
    for (let f = 35; f <= 495; f += 10) {
      const x = fx(f), e = fy(valueAt(electric, f)), m = fy(valueAt(magnetic, f));
      series += `<path d="M${x} ${e - 3}v6M${x - 3} ${e}h6" stroke="#0000c8" stroke-width="1.800"/>`;
      series += `<rect x="${x - 3}" y="${m - 3}" width="6" height="6" fill="#cc6699"/>`;
    }
    document.getElementById('lineSeries').innerHTML = series;

    // Polar chart: every curve is symmetric about the horizontal axis
    const cx = 541, cy = 541;
    let polar = '';
    for (let r = 1; r <= 6; r++) {
      const ring = [];
      for (let a = 0; a < 360; a += 10) {
        const t = a * Math.PI / 180;
        ring.push((cx + r * 85.4 * Math.sin(t)).toFixed(1) + ',' + (cy - r * 85.4 * Math.cos(t)).toFixed(1));
      }
      polar += `<polygon points="${ring.join(' ')}" stroke="#444" stroke-width="2.500"/>`;
    }
    const curves = {
      '#0000ff': [[142, 541], [145, 470], [164, 406], [195, 341], [232, 282], [286, 233], [342, 196], [405, 169], [477, 151], [541, 144], [610, 144], [684, 156], [754, 181], [817, 219], [869, 268], [911, 325], [947, 391], [964, 465], [970, 541]],
      '#008000': [[541, 541], [447, 524], [357, 474], [320, 411], [314, 351], [328, 291], [362, 234], [414, 185], [477, 154], [541, 146], [610, 154], [674, 184], [721, 232], [751, 291], [756, 362], [737, 429], [685, 490], [576, 537], [541, 541]],
      '#ff0000': [[142, 541], [145, 472], [160, 404], [184, 337], [222, 272], [270, 214], [327, 165], [392, 128], [465, 104], [541, 94], [620, 99], [694, 122], [765, 156], [826, 205], [877, 264], [918, 325], [949, 395], [966, 465], [971, 541]]
    };
    for (const [color, half] of Object.entries(curves)) {
      const lower = half.slice().reverse().map(([x, y]) => [x, 2 * cy - y]);
      polar += `<polygon points="${half.concat(lower).join(' ')}" stroke="${color}"/>`;
    }
    document.getElementById('polarLines').innerHTML = polar;
  </script>
</body>

</html>
